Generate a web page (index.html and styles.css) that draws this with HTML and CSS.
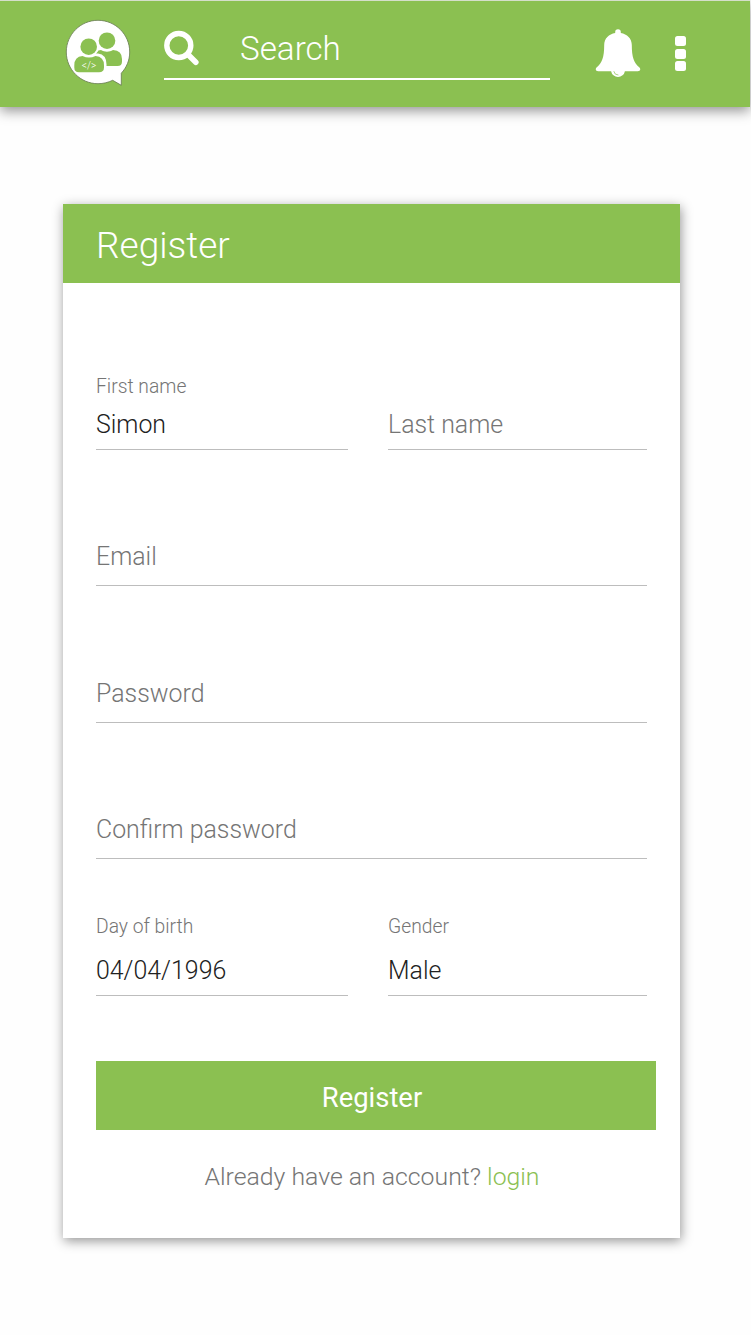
FILE: index.html
```html
<!DOCTYPE html>
<html lang="en">
<head>
<meta charset="utf-8">
<title>Register</title>
<link rel="stylesheet" href="styles.css">
</head>
<body>
<header class="topbar">
  <svg class="logo" width="68" height="68" viewBox="0 0 68 68">
    <path d="M34 2.300C16.500 2.300 2.300 16.500 2.300 34S16.500 65.700 34 65.700c5.300 0 10.300-1.300 14.700-3.400l8.600 5V55.200C62.500 49.500 65.700 42.500 65.700 34 65.700 16.500 51.500 2.300 34 2.300z" fill="#fff" stroke="#66784f" stroke-width=".8"/>
    <circle class="figure" cx="43" cy="22.700" r="8.300"/>
    <path class="figure" d="M31 48V40q0-8 6-8c3.500 2.300 8.500 2.300 12 0q9 .5 9 9v2.500q0 4.500-4.500 4.500z"/>
    <path d="M14 54V40l4-4.500h16q8.500 1 8.500 11v3q-1 4-4 4.500z" fill="#fff"/>
    <circle cx="24.700" cy="28.700" r="10.200" fill="#fff"/>
    <circle class="figure" cx="24.700" cy="28.700" r="8.300"/>
    <path class="figure" d="M10.300 47.500q0-9 8.200-9.500 6.500 3 13 0 8.500.5 8.500 9.500v2q0 4.700-5 4.700H15q-4.700 0-4.700-4.700z"/>
    <text class="logo-code" x="25" y="50.500" text-anchor="middle">&lt;/&gt;</text>
  </svg>
  <div class="search">
    <svg width="36" height="36" viewBox="0 0 36 36">
      <circle cx="14.800" cy="15.500" r="12" fill="none" stroke="#fff" stroke-width="5.400"/>
      <path d="M24.500 25l7.300 7.200" stroke="#fff" stroke-width="5.600" stroke-linecap="round"/>
    </svg>
    <span class="search-text">Search</span>
  </div>
  <svg class="bell" width="46" height="50" viewBox="0 0 46 50">
    <path d="M20.200 4V3a2.800 2.800 0 0 1 5.600 0v1C32 5 36.800 9.500 36.800 16c0 12 2 18 7.700 22.500 1.700 2 .3 3.700-1.700 3.700H29.900a7 7 0 0 1-13.800 0H3.200c-2 0-3.400-1.700-1.700-3.700C7.200 34 9.200 28 9.200 16 9.200 9.500 14 5 20.200 4z" fill="#fff"/>
    <path d="M18.800 42.200a4.600 4.600 0 0 0 4.600 3.800" fill="none" stroke="#8bc051" stroke-width=".7"/>
  </svg>
  <div class="more"><i></i><i></i><i></i></div>
</header>
<main class="card">
  <h1 class="card-title">Register</h1>
  <div class="form">
    <div class="row row-first">
      <div class="field"><span class="label">First name</span><span class="value">Simon</span></div>
      <div class="field"><span class="placeholder">Last name</span></div>
    </div>
    <div class="field field-wide"><span class="placeholder">Email</span></div>
    <div class="field field-wide field-password"><span class="placeholder">Password</span></div>
    <div class="field field-wide"><span class="placeholder">Confirm password</span></div>
    <div class="row row-details">
      <div class="field"><span class="label">Day of birth</span><span class="value">04/04/1996</span></div>
      <div class="field"><span class="label">Gender</span><span class="value">Male</span></div>
    </div>
    <div class="button">Register</div>
    <p class="account">Already have an account? <a class="login">login</a></p>
  </div>
</main>
</body>
</html>
```
FILE: styles.css
```css
* { box-sizing: border-box; }

body {
  margin: 0;
  height: 1335px;
  overflow: hidden;
  background: #fefefe;
  font-family: Roboto, sans-serif;
  font-weight: 300;
}

svg { display: block; flex: none; }

.topbar {
  display: flex;
  align-items: flex-start;
  width: 750px;
  height: 107px;
  padding-left: 64px;
  background: #8bc051;
  border-top: 1px solid #d5dfca;
  box-shadow: 0 4px 12px rgba(0, 0, 0, .42);
}

.logo { margin-top: 17px; }
.figure { fill: #8bc051; }
.logo-code { fill: #fff; font-size: 10px; }

.search {
  display: flex;
  width: 386px;
  height: 50px;
  margin: 29px 0 0 32px;
  border-bottom: 2px solid #fff;
}

.search-text {
  margin-left: 40px;
  color: #fff;
  font-size: 33.200px;
  line-height: 37px;
}

.bell { margin: 28px 0 0 45px; }

.more {
  display: flex;
  flex-direction: column;
  gap: 2.500px;
  margin: 35px 0 0 34px;
}

.more i {
  width: 10.500px;
  height: 10px;
  border-radius: 2.500px;
  background: #fff;
}

.card {
  width: 617px;
  height: 1034px;
  margin: 97px 0 0 63px;
  background: #fff;
  box-shadow: 1px 3px 11px rgba(0, 0, 0, .42);
}

.card-title {
  height: 79px;
  margin: 0;
  padding-left: 33px;
  background: #8bc051;
  color: #fff;
  font-size: 37px;
  font-weight: 300;
  line-height: 83px;
}

.form {
  display: flex;
  flex-direction: column;
  padding: 0 33px;
}

.row {
  display: grid;
  grid-template-columns: 252px 259px;
  column-gap: 40px;
}

.row-first { height: 167px; }
.row-details { height: 137px; }

.field {
  display: flex;
  flex-direction: column;
  justify-content: flex-end;
  padding-bottom: 9px;
  border-bottom: 1px solid #bdbdbd;
}

.field-wide { height: 136px; padding-bottom: 13px; }
.field-password { height: 137px; }

.label {
  margin-bottom: 12px;
  color: #757575;
  font-size: 19.300px;
  line-height: 22px;
}

.row-details .label { margin-bottom: 18px; }

.value, .placeholder { font-size: 24.900px; line-height: 30px; }
.value { color: #212121; }
.placeholder { color: #757575; }

.button {
  width: 560px;
  height: 69px;
  margin-top: 65px;
  padding-right: 8px;
  background: #8bc051;
  color: #fff;
  font-size: 27.400px;
  font-weight: 400;
  line-height: 74px;
  text-align: center;
}

.account {
  margin: 32px 0 0;
  padding-left: 1px;
  color: #757575;
  font-size: 24.800px;
  line-height: 30px;
  text-align: center;
}

.login { color: #8bc051; }
```
